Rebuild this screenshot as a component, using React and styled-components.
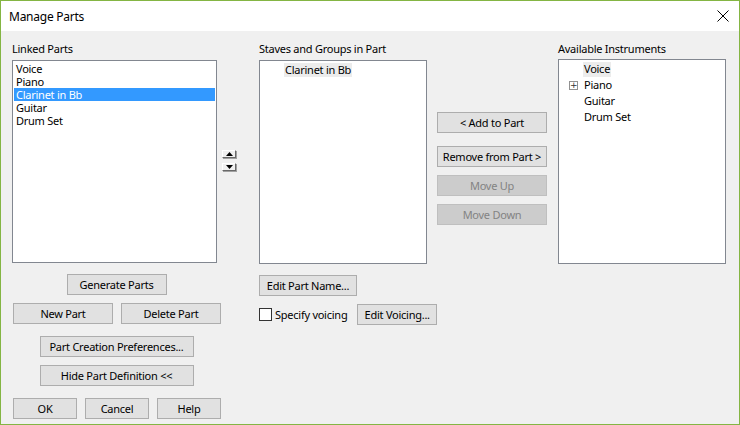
import React from "react";
import styled, { createGlobalStyle } from "styled-components";

const GlobalStyle = createGlobalStyle`
  html, body {
    margin: 0;
    padding: 0;
    background: #ffffff;
  }
  * {
    box-sizing: border-box;
  }
`;

const linkedParts = ["Voice", "Piano", "Clarinet in Bb", "Guitar", "Drum Set"];
const instruments = [
  { name: "Voice", hover: true },
  { name: "Piano", expandable: true },
  { name: "Guitar" },
  { name: "Drum Set" },
];

const App = () => {
  return (
    <>
      <GlobalStyle />
      <Window>
        <TitleBar>
          <Title>Manage Parts</Title>
          <CloseIcon width="12" height="12" viewBox="0 0 12 12">
            <path d="M0.5 0.5 L11.5 11.5 M11.5 0.5 L0.5 11.5" stroke="#000" strokeWidth="1" />
          </CloseIcon>
        </TitleBar>
        <Body>
          <LeftColumn>
            <Label>Linked Parts</Label>
            <ListBox $width={205} $height={203}>
              {linkedParts.map((p) => (
                <ListItem key={p} $selected={p === "Clarinet in Bb"}>
                  {p}
                </ListItem>
              ))}
            </ListBox>
            <Centered $top={11}>
              <Button $width={100}>Generate Parts</Button>
            </Centered>
            <ButtonRow $top={8} $gap={8} $left={1}>
              <Button $width={100}>New Part</Button>
              <Button $width={100}>Delete Part</Button>
            </ButtonRow>
            <Centered $top={12}>
              <Button $width={154}>Part Creation Preferences...</Button>
            </Centered>
            <Centered $top={8}>
              <Button $width={154}>Hide Part Definition &lt;&lt;</Button>
            </Centered>
            <ButtonRow $top={12} $gap={8} $left={1}>
              <Button $width={64}>OK</Button>
              <Button $width={64}>Cancel</Button>
              <Button $width={64}>Help</Button>
            </ButtonRow>
          </LeftColumn>

          <ArrowColumn>
            <ArrowButton>
              <svg width="7" height="4" viewBox="0 0 7 4">
                <path d="M3.5 0 L7 4 L0 4 Z" fill="#000" />
              </svg>
            </ArrowButton>
            <ArrowButton>
              <svg width="7" height="4" viewBox="0 0 7 4">
                <path d="M0 0 L7 0 L3.5 4 Z" fill="#000" />
              </svg>
            </ArrowButton>
          </ArrowColumn>

          <MiddleColumn>
            <Label>Staves and Groups in Part</Label>
            <ListBox $width={168} $height={204}>
              <TreeItem $indent={23} $hover>
                Clarinet in Bb
              </TreeItem>
            </ListBox>
            <ButtonRow $top={11}>
              <Button $width={98}>Edit Part Name...</Button>
            </ButtonRow>
            <ButtonRow $top={8} $gap={0}>
              <CheckLabel>
                <CheckBox />
                Specify voicing
              </CheckLabel>
              <Button $width={80}>Edit Voicing...</Button>
            </ButtonRow>
          </MiddleColumn>

          <ActionColumn>
            <Button $width={110}>&lt; Add to Part</Button>
            <Button $width={110} $top={13}>
              Remove from Part &gt;
            </Button>
            <Button $width={110} $top={8} disabled>
              Move Up
            </Button>
            <Button $width={110} $top={8} disabled>
              Move Down
            </Button>
          </ActionColumn>

          <RightColumn>
            <Label>Available Instruments</Label>
            <ListBox $width={168} $height={205} $shift={-1}>
              <Tree>
                {instruments.map((i) => (
                  <TreeRow key={i.name}>
                    <Expander>{i.expandable && <PlusBox>+</PlusBox>}</Expander>
                    <TreeLabel $hover={i.hover}>{i.name}</TreeLabel>
                  </TreeRow>
                ))}
              </Tree>
            </ListBox>
          </RightColumn>
        </Body>
      </Window>
    </>
  );
};

export default App;

const Window = styled.div`
  width: 740px;
  height: 425px;
  border: 1px solid #84b543;
  background-color: #f0f0f0;
  display: flex;
  flex-direction: column;
  font-family: "Noto Sans", "Open Sans", sans-serif;
  font-size: 11px;
  letter-spacing: -0.25px;
  color: #000;
  overflow: hidden;
`;

const TitleBar = styled.div`
  height: 30px;
  flex: none;
  background: #ffffff;
  display: flex;
  align-items: center;
  justify-content: space-between;
  padding: 0 10px 0 8px;
`;

const Title = styled.div`
  font-size: 12px;
  color: #000;
`;

const CloseIcon = styled.svg`
  display: block;
`;

const Body = styled.div`
  display: flex;
  padding: 10px 0 0 11px;
`;

const Label = styled.div`
  height: 15px;
  line-height: 15px;
  margin-bottom: 4px;
  white-space: nowrap;
`;

const ListBox = styled.div`
  width: ${(p) => p.$width}px;
  height: ${(p) => p.$height}px;
  margin-top: ${(p) => p.$shift || 0}px;
  background: #ffffff;
  border: 1px solid #828790;
  padding: 1px;
`;

const ListItem = styled.div`
  height: 13px;
  line-height: 13px;
  padding-left: 2px;
  white-space: nowrap;
  background: ${(p) => (p.$selected ? "#3399ff" : "transparent")};
  color: ${(p) => (p.$selected ? "#ffffff" : "#000")};
`;

const TreeItem = styled.div`
  display: inline-block;
  margin-left: ${(p) => p.$indent}px;
  height: 14px;
  line-height: 13px;
  padding: 0 1px;
  background: ${(p) => (p.$hover ? "#ececec" : "transparent")};
`;

const Tree = styled.div`
  display: flex;
  flex-direction: column;
`;

const TreeRow = styled.div`
  display: flex;
  align-items: center;
  height: 16px;
`;

const Expander = styled.div`
  width: 23px;
  flex: none;
  display: flex;
  justify-content: flex-end;
  padding-right: 5px;
`;

const PlusBox = styled.div`
  width: 9px;
  height: 9px;
  border: 1px solid #919191;
  font-size: 9px;
  line-height: 6px;
  letter-spacing: 0;
  text-align: center;
  color: #333;
  font-family: "DejaVu Sans", sans-serif;
`;

const TreeLabel = styled.div`
  height: 15px;
  line-height: 13px;
  padding: 0 1px;
  background: ${(p) => (p.$hover ? "#ececec" : "transparent")};
`;

const LeftColumn = styled.div`
  width: 210px;
  flex: none;
  display: flex;
  flex-direction: column;
`;

const Centered = styled.div`
  width: 207px;
  margin-left: 1px;
  display: flex;
  justify-content: center;
  margin-top: ${(p) => p.$top || 0}px;
`;

const ButtonRow = styled.div`
  display: flex;
  align-items: center;
  gap: ${(p) => p.$gap || 0}px;
  margin-top: ${(p) => p.$top || 0}px;
  padding-left: ${(p) => p.$left || 0}px;
`;

const Button = styled.button`
  width: ${(p) => p.$width}px;
  height: 21px;
  margin-top: ${(p) => p.$top || 0}px;
  background: #e1e1e1;
  border: 1px solid #adadad;
  border-radius: 0;
  padding: 0;
  font-family: inherit;
  font-size: 11px;
  letter-spacing: -0.25px;
  color: #000;
  white-space: nowrap;
  &:disabled {
    background: #cccccc;
    border-color: #bfbfbf;
    color: #838383;
  }
`;

const ArrowColumn = styled.div`
  width: 37px;
  flex: none;
  display: flex;
  flex-direction: column;
  gap: 5px;
  padding-top: 109px;
`;

const ArrowButton = styled.div`
  width: 14px;
  height: 8px;
  display: flex;
  align-items: center;
  justify-content: center;
  background: #f0f0f0;
  border-top: 1px solid #ffffff;
  border-left: 1px solid #ffffff;
  border-right: 1px solid #696969;
  border-bottom: 1px solid #696969;
  box-shadow: 1px 1px 0 #a0a0a0;
`;

const MiddleColumn = styled.div`
  width: 178px;
  flex: none;
  display: flex;
  flex-direction: column;
`;

const CheckLabel = styled.label`
  display: flex;
  align-items: center;
  gap: 3px;
  width: 99px;
  white-space: nowrap;
`;

const CheckBox = styled.span`
  width: 13px;
  height: 13px;
  background: #ffffff;
  border: 1px solid #333333;
  flex: none;
`;

const ActionColumn = styled.div`
  width: 121px;
  flex: none;
  display: flex;
  flex-direction: column;
  padding-top: 71px;
`;

const RightColumn = styled.div`
  width: 168px;
  flex: none;
  display: flex;
  flex-direction: column;
`;
